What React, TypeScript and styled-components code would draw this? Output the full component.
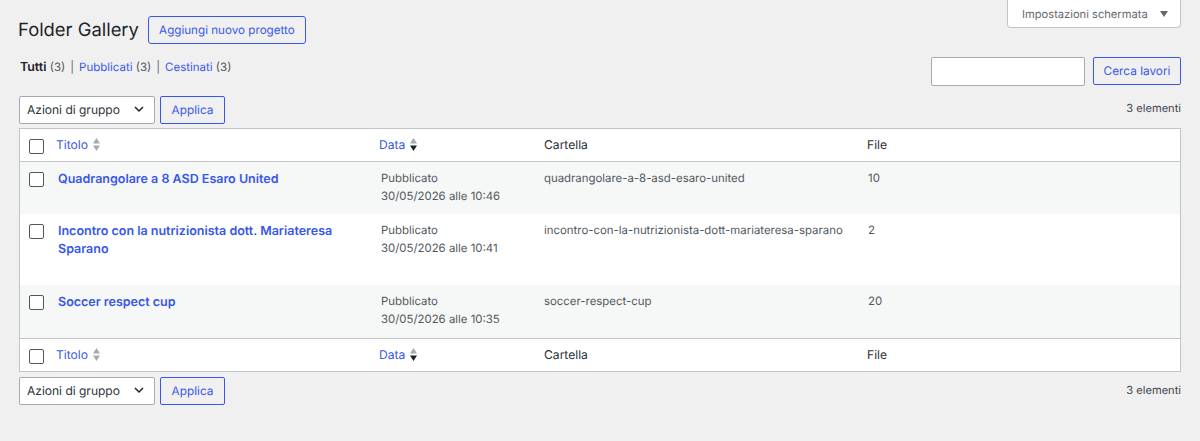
import styled, { createGlobalStyle } from 'styled-components'

const rows = [
    { title: 'Quadrangolare a 8 ASD Esaro United', time: '30/05/2026 alle 10:46', folder: 'quadrangolare-a-8-asd-esaro-united', files: 10, alt: true, height: 52 },
    { title: 'Incontro con la nutrizionista dott. Mariateresa Sparano', time: '30/05/2026 alle 10:41', folder: 'incontro-con-la-nutrizionista-dott-mariateresa-sparano', files: 2, alt: false, height: 71 },
    { title: 'Soccer respect cup', time: '30/05/2026 alle 10:35', folder: 'soccer-respect-cup', files: 20, alt: true, height: 53 },
]

const SortIcon = ({ active }: { active?: boolean }) => (
    <SortSvg width="7" height="13" viewBox="0 0 7 13">
        <path d="M3.5 0 L7 5.5 L0 5.5 Z" fill="#a7aaad" />
        <path d="M0 7.5 L7 7.5 L3.5 13 Z" fill={active ? '#1d2327' : '#a7aaad'} />
    </SortSvg>
)

const HeaderCells = () => (
    <>
        <CheckHead><Check /></CheckHead>
        <HeadCell><SortLink>Titolo<SortIcon /></SortLink></HeadCell>
        <HeadCell><SortLink>Data<SortIcon active /></SortLink></HeadCell>
        <HeadCell>Cartella</HeadCell>
        <HeadCell>File</HeadCell>
    </>
)

const Actions = () => (
    <ActionGroup>
        <BulkSelect>
            Azioni di gruppo
            <svg width="10" height="7" viewBox="0 0 10 7">
                <path d="M1 1 L5 5 L9 1" fill="none" stroke="#1d2327" strokeWidth="1.5" />
            </svg>
        </BulkSelect>
        <OutlineButton $width={65}>Applica</OutlineButton>
    </ActionGroup>
)

const App = () => (
    <Page>
        <GlobalStyle />
        <TopBar>
            <Heading>Folder Gallery</Heading>
            <AddButton>Aggiungi nuovo progetto</AddButton>
            <ScreenTab>
                Impostazioni schermata
                <svg width="8" height="6" viewBox="0 0 8 6"><path d="M0 0 L8 0 L4 6 Z" fill="#646970" /></svg>
            </ScreenTab>
        </TopBar>
        <FilterBar>
            <SubLinks>
                <strong>Tutti</strong> <Count>(3)</Count>
                <Sep>|</Sep>
                <LinkText>Pubblicati</LinkText> <Count>(3)</Count>
                <Sep>|</Sep>
                <LinkText>Cestinati</LinkText> <Count>(3)</Count>
            </SubLinks>
            <SearchBox>
                <SearchInput />
                <OutlineButton $width={88}>Cerca lavori</OutlineButton>
            </SearchBox>
        </FilterBar>
        <TopToolbar>
            <Actions />
            <ItemCount>3 elementi</ItemCount>
        </TopToolbar>
        <ListTable>
            <colgroup>
                <col width="36" />
                <col width="323" />
                <col width="165" />
                <col width="323" />
                <col />
            </colgroup>
            <thead>
                <HeadRow><HeaderCells /></HeadRow>
            </thead>
            <tbody>
                {rows.map((row) => (
                    <BodyRow key={row.folder} $alt={row.alt} $height={row.height}>
                        <CheckCell><Check /></CheckCell>
                        <TitleCell>{row.title}</TitleCell>
                        <BodyCell $indent={2}>Pubblicato<br />{row.time}</BodyCell>
                        <BodyCell $indent={0}>{row.folder}</BodyCell>
                        <BodyCell $indent={1}>{row.files}</BodyCell>
                    </BodyRow>
                ))}
            </tbody>
            <tfoot>
                <FootRow><HeaderCells /></FootRow>
            </tfoot>
        </ListTable>
        <BottomToolbar>
            <Actions />
            <BottomCount>3 elementi</BottomCount>
        </BottomToolbar>
    </Page>
)

const GlobalStyle = createGlobalStyle`
    html, body {
        margin: 0;
        background: #f0f0f1;
        color: #3c434a;
        font-family: Inter, "Liberation Sans", sans-serif;
        font-size: 13px;
        text-rendering: geometricPrecision;
    }
`

const Page = styled.div`
    width: 1200px;
    height: 441px;
    padding: 0 19px;
    box-sizing: border-box;
    overflow: hidden;
`

const TopBar = styled.div`
    display: flex;
    align-items: flex-start;
    height: 57px;
`

const Heading = styled.h1`
    margin: 17px 9px 0 -1px;
    font-size: 18.4px;
    font-weight: 400;
    line-height: 27px;
    color: #1d2327;
`

const AddButton = styled.div`
    margin-top: 16px;
    width: 158px;
    height: 28px;
    box-sizing: border-box;
    border: 1px solid #3858e9;
    border-radius: 3px;
    color: #3858e9;
    font-size: 11.65px;
    line-height: 26px;
    text-align: center;
`

const ScreenTab = styled.div`
    margin-left: auto;
    width: 174px;
    height: 28px;
    box-sizing: border-box;
    padding: 0 12px 0 14px;
    display: flex;
    align-items: center;
    justify-content: space-between;
    background: #fff;
    border: 1px solid #c3c4c7;
    border-top: none;
    border-radius: 0 0 4px 4px;
    color: #646970;
    font-size: 11.15px;
`

const FilterBar = styled.div`
    display: flex;
    justify-content: space-between;
    height: 39px;
`

const SubLinks = styled.div`
    margin: 1px 0 0 1px;
    font-size: 11.5px;
    line-height: 18px;
    color: #646970;

    strong {
        color: #1d2327;
        font-size: 12.4px;
        font-weight: 600;
    }
`

const Count = styled.span`
    color: #50575e;
`

const Sep = styled.span`
    margin: 0 5px;
    color: #646970;
`

const LinkText = styled.span`
    color: #3858e9;
`

const SearchBox = styled.div`
    display: flex;
    gap: 8px;
    height: 29px;
`

const SearchInput = styled.div`
    width: 154px;
    box-sizing: border-box;
    background: #fff;
    border: 1px solid #a7aaad;
    border-radius: 2px;
`

const OutlineButton = styled.div<{ $width: number }>`
    width: ${(p) => p.$width}px;
    height: 28px;
    box-sizing: border-box;
    border: 1px solid #3858e9;
    border-radius: 2px;
    color: #3858e9;
    font-size: 11.8px;
    line-height: 26px;
    text-align: center;
`

const TopToolbar = styled.div`
    display: flex;
    justify-content: space-between;
    height: 32px;
`

const BottomToolbar = styled(TopToolbar)`
    margin-top: 5px;
`

const ActionGroup = styled.div`
    display: flex;
    gap: 5px;
`

const BulkSelect = styled.div`
    width: 136px;
    height: 28px;
    box-sizing: border-box;
    padding: 0 10px 1px 7px;
    display: flex;
    align-items: center;
    justify-content: space-between;
    background: #fff;
    border: 1px solid #a7aaad;
    border-radius: 2px;
    color: #2c3338;
    font-size: 12px;
`

const ItemCount = styled.div`
    margin-top: 4px;
    font-size: 11.1px;
    line-height: 17px;
    color: #3c434a;
`

const BottomCount = styled(ItemCount)`
    margin-top: 5px;
`

const ListTable = styled.table`
    width: 1162px;
    height: 244px;
    table-layout: fixed;
    border-collapse: separate;
    border-spacing: 0;
    background: #fff;
    border: 1px solid #c3c4c7;
    font-size: 11.5px;
`

const HeadRow = styled.tr`
    height: 33px;

    th {
        border-bottom: 1px solid #c3c4c7;
    }
`

const FootRow = styled.tr`
    height: 33px;

    th {
        border-top: 1px solid #c3c4c7;
    }
`

const BodyRow = styled.tr<{ $alt: boolean; $height: number }>`
    height: ${(p) => p.$height}px;
    background: ${(p) => (p.$alt ? '#f6f7f7' : '#fff')};
`

const CheckHead = styled.th`
    padding: 3px 0 0 9px;
    text-align: left;
`

const HeadCell = styled.th`
    padding: 0 0 1px;
    text-align: left;
    font-weight: 400;
    font-size: 12.1px;
    color: #2c3338;
`

const SortLink = styled.span`
    display: inline-flex;
    align-items: center;
    gap: 5px;
    color: #3858e9;
`

const SortSvg = styled.svg`
    display: block;
`

const CheckCell = styled.td`
    padding: 10px 0 0 9px;
    vertical-align: top;
`

const TitleCell = styled.td`
    padding: 9px 20px 0 2px;
    vertical-align: top;
    color: #3858e9;
    font-size: 12.5px;
    font-weight: 600;
    line-height: 17.5px;
`

const BodyCell = styled.td<{ $indent: number }>`
    padding: 8px 0 0 ${(p) => p.$indent}px;
    vertical-align: top;
    font-size: 11.4px;
    line-height: 17.5px;
    color: #50575e;
`

const Check = styled.div`
    width: 14.5px;
    height: 14.5px;
    box-sizing: border-box;
    background: #fff;
    border: 1px solid #50575e;
    border-radius: 2px;
`

export default App
